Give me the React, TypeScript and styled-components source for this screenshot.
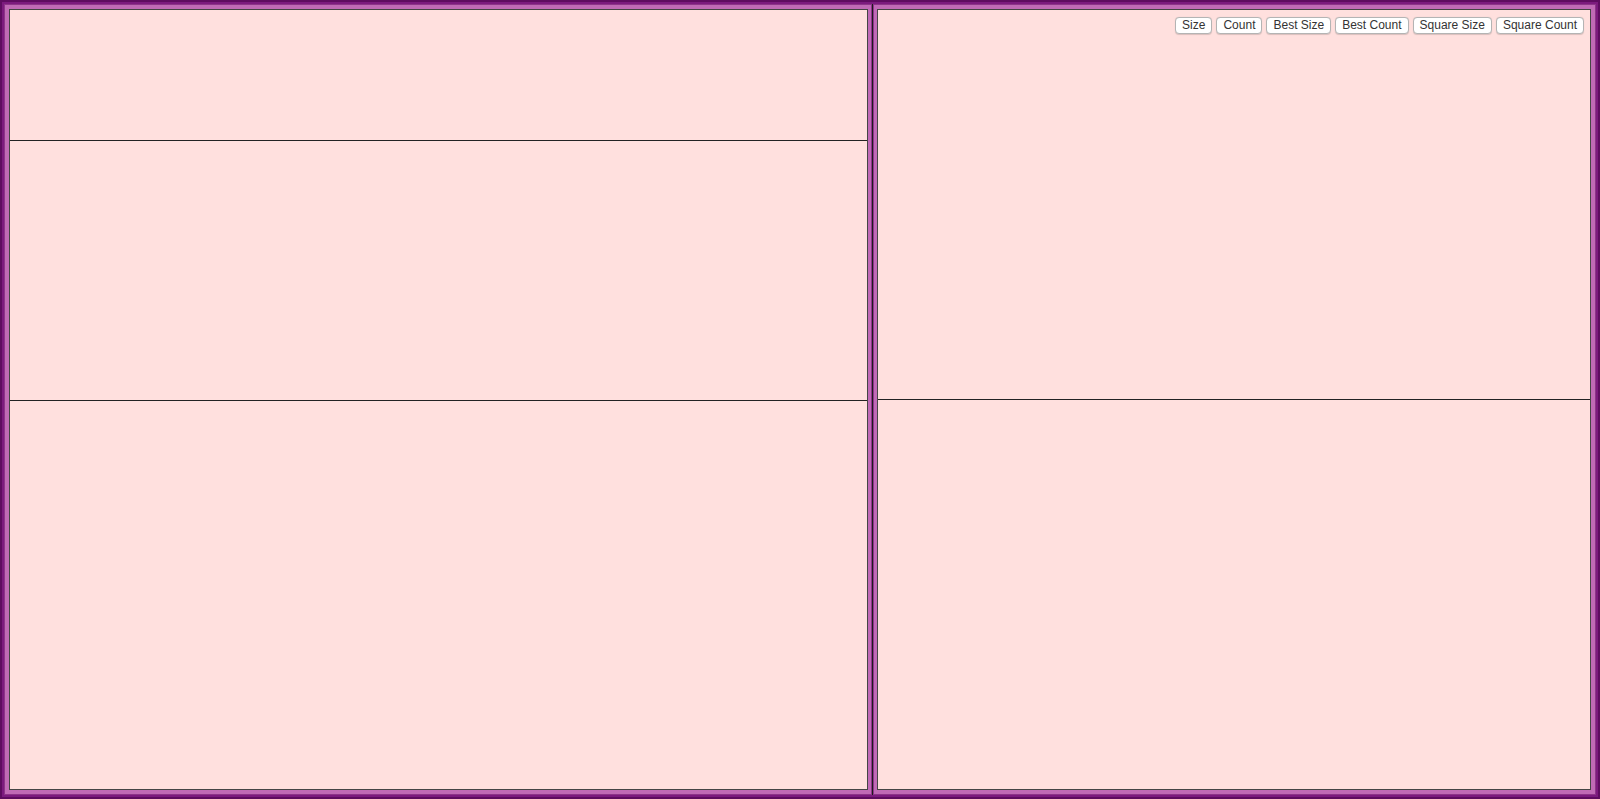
import React from "react";
import styled, { createGlobalStyle } from "styled-components";

const Global = createGlobalStyle`
  html, body { margin: 0; padding: 0; }
  body { font-family: "Liberation Sans", Arial, sans-serif; }
  * { box-sizing: border-box; }
`;

const Root = styled.div`
  height: 799px;
  width: 100%;
  display: flex;
  background: #7c1a7e;
  border: 2px solid #5e0c60;
  padding: 2px;
`;

const Pane = styled.div<{ $grow: number; $side: "left" | "right" }>`
  flex: ${(p) => p.$grow} 1 0;
  min-width: 0;
  display: flex;
  background: #c06ab6;
  border: 1px solid #8d3489;
  padding: 4px;
  ${(p) => (p.$side === "left" ? "padding-right: 3px;" : "padding-left: 3px;")}
`;

const Splitter = styled.div`
  width: 1px;
  flex: 0 0 1px;
  background: #1c1c1c;
`;

const Inner = styled.div`
  flex: 1;
  display: flex;
  flex-direction: column;
  border: 1px solid #454545;
  background: #ffe0de;
  min-width: 0;
`;

const Row = styled.div<{ $grow: number }>`
  flex: ${(p) => p.$grow} 1 0;
  min-height: 0;
  border-top: 1px solid #222;
  &:first-child { border-top: none; }
  display: flex;
  justify-content: flex-end;
  align-items: flex-start;
`;

const Toolbar = styled.div`
  display: flex;
  gap: 4px;
  padding: 7px 6px 0 0;
`;

const Button = styled.button`
  height: 17px;
  padding: 0 6px;
  font-family: "Liberation Sans", Arial, sans-serif;
  font-size: 12px;
  line-height: 15px;
  color: #333;
  background: #fff;
  border: 1px solid #b4b4b4;
  border-radius: 4px;
  box-shadow: 0 0.5px 1px rgba(0, 0, 0, 0.15);
  cursor: pointer;
`;

const labels = ["Size", "Count", "Best Size", "Best Count", "Square Size", "Square Count"];

export default function App() {
  return (
    <>
      <Global />
      <Root>
        <Pane $grow={5463} $side="left">
          <Inner>
            <Row $grow={1} />
            <Row $grow={2} />
            <Row $grow={3} />
          </Inner>
        </Pane>
        <Splitter />
        <Pane $grow={4537} $side="right">
          <Inner>
            <Row $grow={1}>
              <Toolbar>
                {labels.map((l) => (
                  <Button key={l}>{l}</Button>
                ))}
              </Toolbar>
            </Row>
            <Row $grow={1} />
          </Inner>
        </Pane>
      </Root>
    </>
  );
}
